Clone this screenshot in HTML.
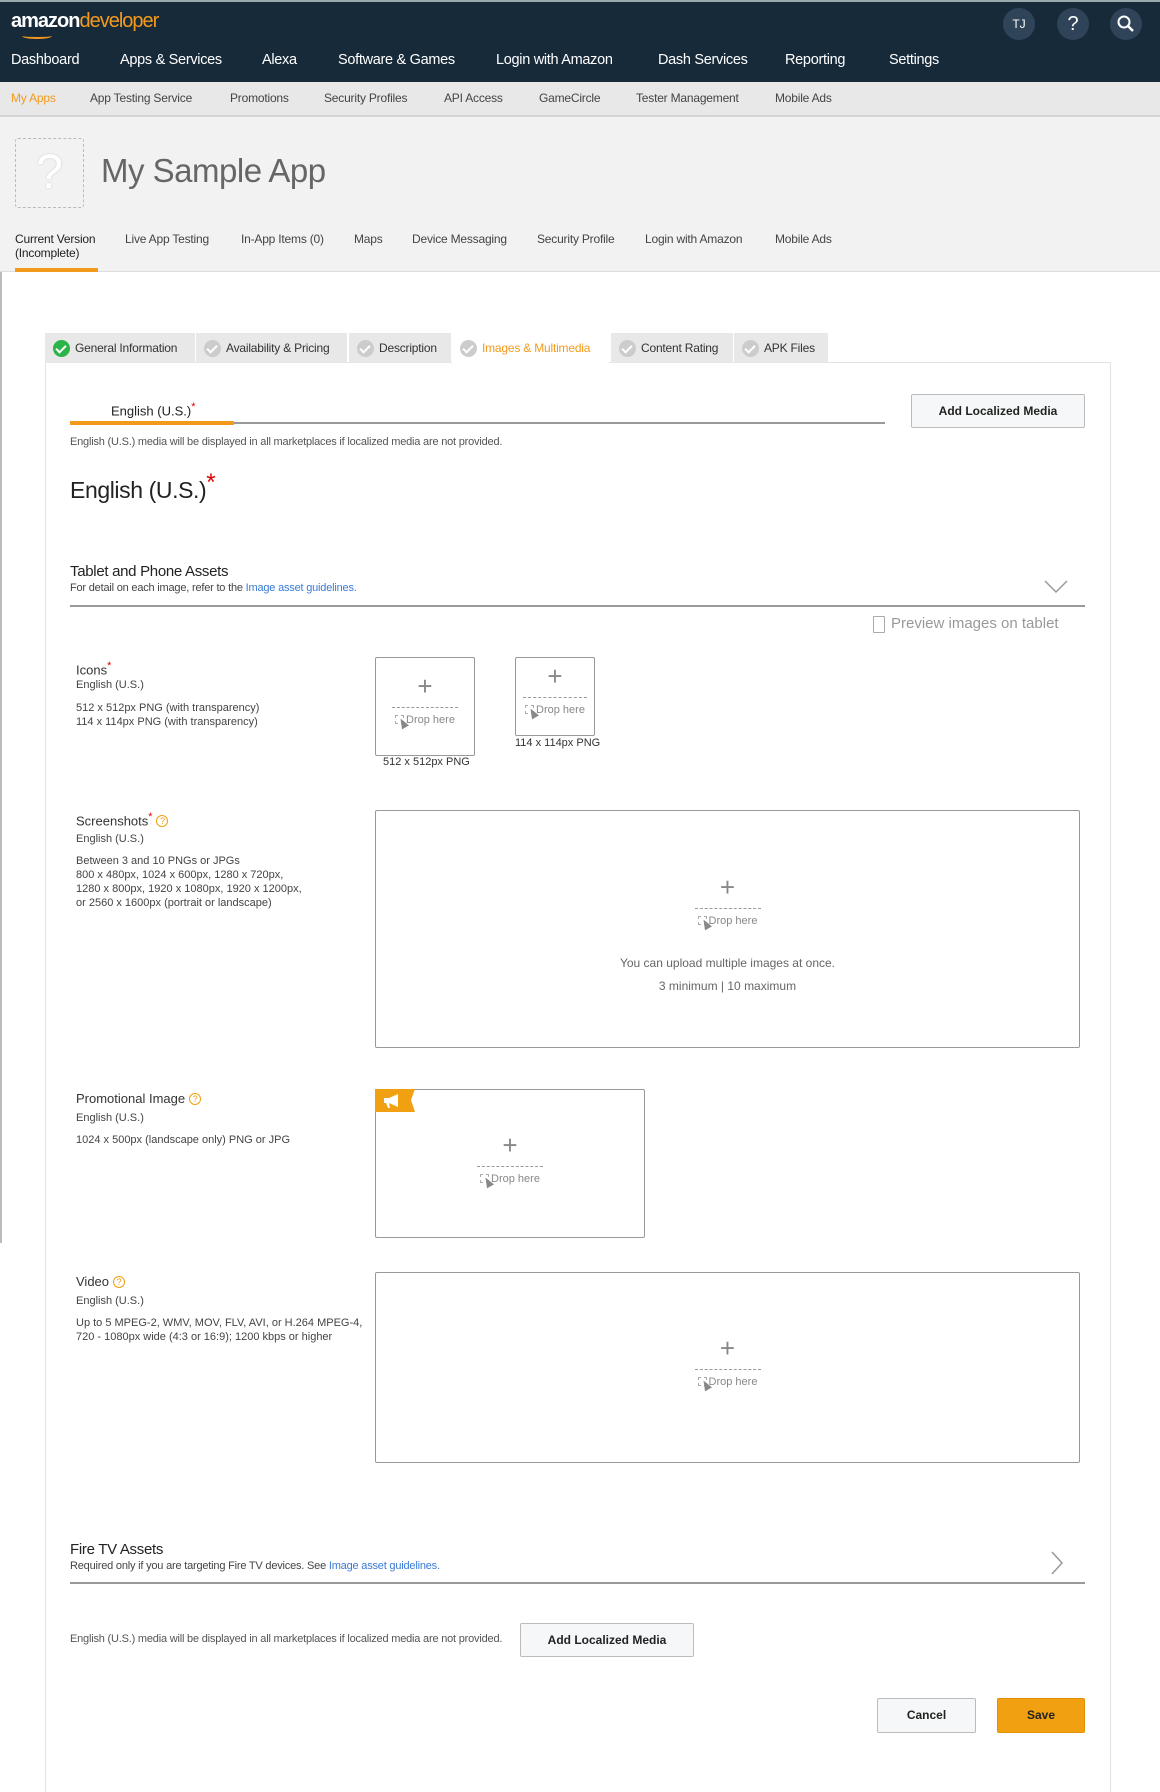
<!DOCTYPE html>
<html><head><meta charset="utf-8">
<style>
*{box-sizing:border-box;margin:0;padding:0}
body{width:1160px;height:1778px;position:relative;background:#fff;font-family:"Liberation Sans",sans-serif;color:#333;overflow:hidden}
.t{position:absolute;white-space:nowrap}
.hdr{position:absolute;left:0;top:0;width:1160px;height:82px;background:#172a3a;border-top:2px solid #9aa;}
.nav{color:#fff;font-size:14.5px;letter-spacing:-0.3px;top:52px}
.sub{position:absolute;left:0;top:82px;width:1160px;height:35px;background:#e8e8e8;border-bottom:2px solid #d4d4d4}
.sn{font-size:12px;color:#444;top:91px;letter-spacing:-0.2px}
.app{position:absolute;left:0;top:117px;width:1160px;height:155px;background:#f2f2f2;border-bottom:1px solid #ddd}
.at{font-size:12px;color:#444;top:232px;letter-spacing:-0.2px}
.circ{position:absolute;width:32px;height:32px;border-radius:50%;background:#2f4458;color:#fff;top:8px;text-align:center;line-height:32px}
.tab{position:absolute;top:333px;height:30px;background:#e8e8e8;font-size:12px;color:#333;line-height:30px;padding-left:30px;letter-spacing:-0.2px}
.tab i{position:absolute;left:8px;top:7px;width:17px;height:17px;border-radius:50%;background:#ccc}
.tab i:after{content:"";position:absolute;left:5px;top:3px;width:4px;height:8px;border:solid #fff;border-width:0 2px 2px 0;transform:rotate(45deg)}
.lbl{font-size:13px;color:#333;left:76px}
.sm{font-size:11px;color:#444;left:76px;line-height:14px}
.box{position:absolute;border:1px solid #999;border-radius:2px;background:#fff}
.dz{position:absolute;text-align:center;color:#888;font-size:11px}
.plus{font-size:26px;color:#888;line-height:26px;font-weight:300}
.dash{border-top:1px dashed #999;width:66px;margin:8px auto 6px}
.dz .d{display:inline-block;width:9px;height:9px;border:1px dashed #aaa;vertical-align:-1px;position:relative;margin-right:2px}
.dz .d:after{content:"";position:absolute;left:3px;top:2px;border-left:4px solid transparent;border-right:4px solid transparent;border-bottom:10px solid #888;transform:rotate(-30deg)}
.q{display:inline-block;width:12px;height:12px;border:1px solid #f0a010;border-radius:50%;color:#f0a010;font-size:9px;text-align:center;line-height:10px;vertical-align:1px;margin-left:4px}
.btn{position:absolute;background:#f6f7f8;border:1px solid #bbb;border-radius:2px;font-size:12px;font-weight:bold;color:#222;text-align:center}
.red{color:#d00}
a{color:#3a7bd5;text-decoration:none}
</style></head><body>
<div class="hdr"></div>
<div class="t" style="left:11px;top:10px;font-size:20px;color:#fff;letter-spacing:-1px;font-weight:bold">amazon<span style="color:#f39a1d;font-weight:normal">developer</span></div>
<div style="position:absolute;left:22px;top:33px;width:30px;height:6px;border-bottom:2px solid #f39a1d;border-radius:0 0 50% 50%"></div>
<div class="circ" style="left:1003px;top:8px;font-size:12px">TJ</div>
<div class="circ" style="left:1057px;top:8px;font-size:20px">?</div>
<div class="circ" style="left:1110px;top:8px"><svg width="20" height="20" viewBox="0 0 20 20" style="margin-top:6px"><circle cx="8" cy="8" r="5.5" stroke="#fff" stroke-width="2" fill="none"/><line x1="12" y1="12" x2="17" y2="17" stroke="#fff" stroke-width="2.5"/></svg></div>
<div class="t nav" style="left:11px">Dashboard</div>
<div class="t nav" style="left:120px">Apps &amp; Services</div>
<div class="t nav" style="left:262px">Alexa</div>
<div class="t nav" style="left:338px">Software &amp; Games</div>
<div class="t nav" style="left:496px">Login with Amazon</div>
<div class="t nav" style="left:658px">Dash Services</div>
<div class="t nav" style="left:785px">Reporting</div>
<div class="t nav" style="left:889px">Settings</div>
<div class="sub"></div>
<div class="t sn" style="left:11px;color:#f39a1d">My Apps</div>
<div class="t sn" style="left:90px">App Testing Service</div>
<div class="t sn" style="left:230px">Promotions</div>
<div class="t sn" style="left:324px">Security Profiles</div>
<div class="t sn" style="left:444px">API Access</div>
<div class="t sn" style="left:539px">GameCircle</div>
<div class="t sn" style="left:636px">Tester Management</div>
<div class="t sn" style="left:775px">Mobile Ads</div>
<div class="app"></div>
<div style="position:absolute;left:15px;top:138px;width:69px;height:70px;border:1px dashed #bbb;border-radius:3px;background:#f2f2f2;color:#fff;font-size:48px;text-align:center;line-height:68px;text-shadow:0 0 2px #ccc">?</div>
<div class="t" style="left:101px;top:152px;font-size:33px;color:#666;letter-spacing:-0.5px">My Sample App</div>
<div class="t at" style="left:15px;color:#222">Current Version<br>(Incomplete)</div>
<div style="position:absolute;left:15px;top:268px;width:83px;height:4px;background:#f39a1d"></div>
<div class="t at" style="left:125px">Live App Testing</div>
<div class="t at" style="left:241px">In-App Items (0)</div>
<div class="t at" style="left:354px">Maps</div>
<div class="t at" style="left:412px">Device Messaging</div>
<div class="t at" style="left:537px">Security Profile</div>
<div class="t at" style="left:645px">Login with Amazon</div>
<div class="t at" style="left:775px">Mobile Ads</div>
<div style="position:absolute;left:0;top:272px;width:2px;height:971px;background:#bbb"></div>
<div style="position:absolute;left:45px;top:362px;width:1066px;height:1430px;border:1px solid #e2e2e2;border-bottom:none"></div>
<div class="tab" style="left:45px;width:150px"><i style="background:#2cb34a"></i>General Information</div>
<div class="tab" style="left:196px;width:151px"><i></i>Availability &amp; Pricing</div>
<div class="tab" style="left:349px;width:102px"><i></i>Description</div>
<div class="tab" style="left:452px;width:157px;background:#fff;color:#f39a1d;height:31px"><i></i>Images &amp; Multimedia</div>
<div class="tab" style="left:611px;width:122px"><i></i>Content Rating</div>
<div class="tab" style="left:734px;width:94px"><i></i>APK Files</div>
<div class="t" style="left:111px;top:401px;font-size:13px;color:#222">English (U.S.)<sup class="red">*</sup></div>
<div style="position:absolute;left:70px;top:422px;width:815px;height:2px;background:#999"></div>
<div style="position:absolute;left:70px;top:421px;width:164px;height:4px;background:#f39a1d"></div>
<div class="btn" style="left:911px;top:394px;width:174px;height:34px;line-height:32px">Add Localized Media</div>
<div class="t" style="left:70px;top:436px;font-size:11px;color:#555;letter-spacing:-0.2px">English (U.S.) media will be displayed in all marketplaces if localized media are not provided.</div>
<div class="t" style="left:70px;top:477px;font-size:23px;color:#222;letter-spacing:-0.4px">English (U.S.)<span class="red" style="font-size:24px;position:relative;top:-8px">*</span></div>
<div class="t" style="left:70px;top:563px;font-size:15px;color:#222;letter-spacing:-0.3px">Tablet and Phone Assets</div>
<div class="t" style="left:70px;top:582px;font-size:11px;color:#444;letter-spacing:-0.2px">For detail on each image, refer to the <a>Image asset guidelines.</a></div>
<svg style="position:absolute;left:1044px;top:580px" width="24" height="14"><polyline points="1,1 12,12 23,1" fill="none" stroke="#999" stroke-width="1.5"/></svg>
<div style="position:absolute;left:70px;top:605px;width:1015px;height:2px;background:#999"></div>
<div style="position:absolute;left:873px;top:616px;width:12px;height:17px;border:1.5px solid #aaa;border-radius:1px"></div>
<div class="t" style="left:891px;top:615px;font-size:15px;color:#999">Preview images on tablet</div>
<div class="t lbl" style="top:660px">Icons<sup class="red">*</sup></div>
<div class="t sm" style="top:678px">English (U.S.)</div>
<div class="t sm" style="top:701px">512 x 512px PNG (with transparency)<br>114 x 114px PNG (with transparency)</div>
<div class="box" style="left:375px;top:657px;width:100px;height:99px"></div>
<div class="dz" style="left:375px;top:673px;width:100px"><div class="plus">+</div><div class="dash"></div><span class="d"></span>Drop here</div>
<div class="t" style="left:383px;top:756px;font-size:11px;color:#333">512 x 512px PNG</div>
<div class="box" style="left:515px;top:657px;width:80px;height:79px"></div>
<div class="dz" style="left:515px;top:663px;width:80px"><div class="plus">+</div><div class="dash" style="width:64px"></div><span class="d"></span>Drop here</div>
<div class="t" style="left:515px;top:737px;font-size:11px;color:#333">114 x 114px PNG</div>
<div class="t lbl" style="top:811px">Screenshots<sup class="red">*</sup><span class="q">?</span></div>
<div class="t sm" style="top:832px">English (U.S.)</div>
<div class="t sm" style="top:854px">Between 3 and 10 PNGs or JPGs<br>800 x 480px, 1024 x 600px, 1280 x 720px,<br>1280 x 800px, 1920 x 1080px, 1920 x 1200px,<br>or 2560 x 1600px (portrait or landscape)</div>
<div class="box" style="left:375px;top:810px;width:705px;height:238px"></div>
<div class="dz" style="left:375px;top:874px;width:705px"><div class="plus">+</div><div class="dash"></div><span class="d"></span>Drop here<div style="font-size:12px;color:#666;margin-top:29px">You can upload multiple images at once.</div><div style="font-size:12px;color:#666;margin-top:9px">3 minimum | 10 maximum</div></div>
<div class="t lbl" style="top:1091px">Promotional Image<span class="q">?</span></div>
<div class="t sm" style="top:1111px">English (U.S.)</div>
<div class="t sm" style="top:1133px">1024 x 500px (landscape only) PNG or JPG</div>
<div class="box" style="left:375px;top:1089px;width:270px;height:149px"></div>
<svg style="position:absolute;left:375px;top:1089px" width="40" height="23"><polygon points="0,0 40,0 36,11 40,23 0,23" fill="#f0a010"/><path d="M9 9h5l9-4v13l-9-4h-5z M11 14l2 5h2l-1-5" fill="#fff"/></svg>
<div class="dz" style="left:375px;top:1132px;width:270px"><div class="plus">+</div><div class="dash"></div><span class="d"></span>Drop here</div>
<div class="t lbl" style="top:1274px">Video<span class="q">?</span></div>
<div class="t sm" style="top:1294px">English (U.S.)</div>
<div class="t sm" style="top:1316px">Up to 5 MPEG-2, WMV, MOV, FLV, AVI, or H.264 MPEG-4,<br>720 - 1080px wide (4:3 or 16:9); 1200 kbps or higher</div>
<div class="box" style="left:375px;top:1272px;width:705px;height:191px"></div>
<div class="dz" style="left:375px;top:1335px;width:705px"><div class="plus">+</div><div class="dash"></div><span class="d"></span>Drop here</div>
<div class="t" style="left:70px;top:1541px;font-size:15px;color:#222;letter-spacing:-0.3px">Fire TV Assets</div>
<div class="t" style="left:70px;top:1560px;font-size:11px;color:#444;letter-spacing:-0.2px">Required only if you are targeting Fire TV devices. See <a>Image asset guidelines.</a></div>
<svg style="position:absolute;left:1050px;top:1551px" width="14" height="24"><polyline points="2,1 12,12 2,23" fill="none" stroke="#999" stroke-width="1.5"/></svg>
<div style="position:absolute;left:70px;top:1582px;width:1015px;height:2px;background:#999"></div>
<div class="t" style="left:70px;top:1633px;font-size:11px;color:#555;letter-spacing:-0.2px">English (U.S.) media will be displayed in all marketplaces if localized media are not provided.</div>
<div class="btn" style="left:520px;top:1623px;width:174px;height:34px;line-height:32px">Add Localized Media</div>
<div class="btn" style="left:877px;top:1698px;width:99px;height:35px;line-height:33px">Cancel</div>
<div class="btn" style="left:997px;top:1698px;width:88px;height:35px;line-height:33px;background:#f0a010;border-color:#e09000">Save</div>
</body></html>
